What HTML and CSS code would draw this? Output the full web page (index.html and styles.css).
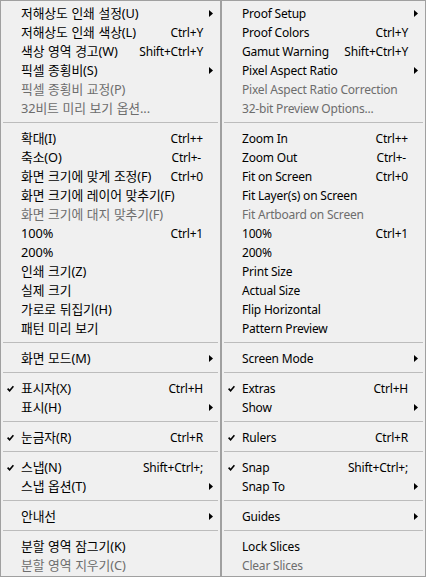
FILE: index.html
```html
<!DOCTYPE html>
<html lang="ko">
<head>
  <meta charset="UTF-8">
  <title>보기 메뉴</title>
  <link rel="stylesheet" href="styles.css">
</head>
<body>
  <div class="menus">
    <ul class="menu menu-ko">
      <li class="item"><span class="check"></span><span class="label">저해상도 인쇄 설정(U)</span><span class="key"></span><span class="sub"><svg width="4" height="7"><polygon points="0,0 4,3.5 0,7"/></svg></span></li>
      <li class="item"><span class="check"></span><span class="label">저해상도 인쇄 색상(L)</span><span class="key">Ctrl+Y</span><span class="sub"></span></li>
      <li class="item"><span class="check"></span><span class="label">색상 영역 경고(W)</span><span class="key">Shift+Ctrl+Y</span><span class="sub"></span></li>
      <li class="item"><span class="check"></span><span class="label">픽셀 종횡비(S)</span><span class="key"></span><span class="sub"><svg width="4" height="7"><polygon points="0,0 4,3.5 0,7"/></svg></span></li>
      <li class="item disabled"><span class="check"></span><span class="label">픽셀 종횡비 교정(P)</span><span class="key"></span><span class="sub"></span></li>
      <li class="item disabled"><span class="check"></span><span class="label">32비트 미리 보기 옵션...</span><span class="key"></span><span class="sub"></span></li>
      <li class="sep"></li>
      <li class="item"><span class="check"></span><span class="label">확대(I)</span><span class="key">Ctrl++</span><span class="sub"></span></li>
      <li class="item"><span class="check"></span><span class="label">축소(O)</span><span class="key key-minus">Ctrl+-</span><span class="sub"></span></li>
      <li class="item"><span class="check"></span><span class="label">화면 크기에 맞게 조정(F)</span><span class="key">Ctrl+0</span><span class="sub"></span></li>
      <li class="item"><span class="check"></span><span class="label">화면 크기에 레이어 맞추기(F)</span><span class="key"></span><span class="sub"></span></li>
      <li class="item disabled"><span class="check"></span><span class="label">화면 크기에 대지 맞추기(F)</span><span class="key"></span><span class="sub"></span></li>
      <li class="item"><span class="check"></span><span class="label">100%</span><span class="key">Ctrl+1</span><span class="sub"></span></li>
      <li class="item"><span class="check"></span><span class="label">200%</span><span class="key"></span><span class="sub"></span></li>
      <li class="item"><span class="check"></span><span class="label">인쇄 크기(Z)</span><span class="key"></span><span class="sub"></span></li>
      <li class="item"><span class="check"></span><span class="label">실제 크기</span><span class="key"></span><span class="sub"></span></li>
      <li class="item"><span class="check"></span><span class="label">가로로 뒤집기(H)</span><span class="key"></span><span class="sub"></span></li>
      <li class="item"><span class="check"></span><span class="label">패턴 미리 보기</span><span class="key"></span><span class="sub"></span></li>
      <li class="sep"></li>
      <li class="item"><span class="check"></span><span class="label">화면 모드(M)</span><span class="key"></span><span class="sub"><svg width="4" height="7"><polygon points="0,0 4,3.5 0,7"/></svg></span></li>
      <li class="sep"></li>
      <li class="item"><span class="check"><svg width="7" height="7"><polyline points="0.6,3.6 2.6,5.8 6.4,1.2"/></svg></span><span class="label">표시자(X)</span><span class="key">Ctrl+H</span><span class="sub"></span></li>
      <li class="item"><span class="check"></span><span class="label">표시(H)</span><span class="key"></span><span class="sub"><svg width="4" height="7"><polygon points="0,0 4,3.5 0,7"/></svg></span></li>
      <li class="sep"></li>
      <li class="item"><span class="check"><svg width="7" height="7"><polyline points="0.6,3.6 2.6,5.8 6.4,1.2"/></svg></span><span class="label">눈금자(R)</span><span class="key">Ctrl+R</span><span class="sub"></span></li>
      <li class="sep"></li>
      <li class="item"><span class="check"><svg width="7" height="7"><polyline points="0.6,3.6 2.6,5.8 6.4,1.2"/></svg></span><span class="label">스냅(N)</span><span class="key">Shift+Ctrl+;</span><span class="sub"></span></li>
      <li class="item"><span class="check"></span><span class="label">스냅 옵션(T)</span><span class="key"></span><span class="sub"><svg width="4" height="7"><polygon points="0,0 4,3.5 0,7"/></svg></span></li>
      <li class="sep"></li>
      <li class="item"><span class="check"></span><span class="label">안내선</span><span class="key"></span><span class="sub"><svg width="4" height="7"><polygon points="0,0 4,3.5 0,7"/></svg></span></li>
      <li class="sep"></li>
      <li class="item"><span class="check"></span><span class="label">분할 영역 잠그기(K)</span><span class="key"></span><span class="sub"></span></li>
      <li class="item disabled"><span class="check"></span><span class="label">분할 영역 지우기(C)</span><span class="key"></span><span class="sub"></span></li>
    </ul>
    <ul class="menu menu-en">
      <li class="item"><span class="check"></span><span class="label">Proof Setup</span><span class="key"></span><span class="sub"><svg width="4" height="7"><polygon points="0,0 4,3.5 0,7"/></svg></span></li>
      <li class="item"><span class="check"></span><span class="label">Proof Colors</span><span class="key">Ctrl+Y</span><span class="sub"></span></li>
      <li class="item"><span class="check"></span><span class="label">Gamut Warning</span><span class="key">Shift+Ctrl+Y</span><span class="sub"></span></li>
      <li class="item"><span class="check"></span><span class="label">Pixel Aspect Ratio</span><span class="key"></span><span class="sub"><svg width="4" height="7"><polygon points="0,0 4,3.5 0,7"/></svg></span></li>
      <li class="item disabled"><span class="check"></span><span class="label">Pixel Aspect Ratio Correction</span><span class="key"></span><span class="sub"></span></li>
      <li class="item disabled"><span class="check"></span><span class="label">32-bit Preview Options...</span><span class="key"></span><span class="sub"></span></li>
      <li class="sep"></li>
      <li class="item"><span class="check"></span><span class="label">Zoom In</span><span class="key">Ctrl++</span><span class="sub"></span></li>
      <li class="item"><span class="check"></span><span class="label">Zoom Out</span><span class="key key-minus">Ctrl+-</span><span class="sub"></span></li>
      <li class="item"><span class="check"></span><span class="label">Fit on Screen</span><span class="key">Ctrl+0</span><span class="sub"></span></li>
      <li class="item"><span class="check"></span><span class="label">Fit Layer(s) on Screen</span><span class="key"></span><span class="sub"></span></li>
      <li class="item disabled"><span class="check"></span><span class="label">Fit Artboard on Screen</span><span class="key"></span><span class="sub"></span></li>
      <li class="item"><span class="check"></span><span class="label">100%</span><span class="key">Ctrl+1</span><span class="sub"></span></li>
      <li class="item"><span class="check"></span><span class="label">200%</span><span class="key"></span><span class="sub"></span></li>
      <li class="item"><span class="check"></span><span class="label">Print Size</span><span class="key"></span><span class="sub"></span></li>
      <li class="item"><span class="check"></span><span class="label">Actual Size</span><span class="key"></span><span class="sub"></span></li>
      <li class="item"><span class="check"></span><span class="label">Flip Horizontal</span><span class="key"></span><span class="sub"></span></li>
      <li class="item"><span class="check"></span><span class="label">Pattern Preview</span><span class="key"></span><span class="sub"></span></li>
      <li class="sep"></li>
      <li class="item"><span class="check"></span><span class="label">Screen Mode</span><span class="key"></span><span class="sub"><svg width="4" height="7"><polygon points="0,0 4,3.5 0,7"/></svg></span></li>
      <li class="sep"></li>
      <li class="item"><span class="check"><svg width="7" height="7"><polyline points="0.6,3.6 2.6,5.8 6.4,1.2"/></svg></span><span class="label">Extras</span><span class="key">Ctrl+H</span><span class="sub"></span></li>
      <li class="item"><span class="check"></span><span class="label">Show</span><span class="key"></span><span class="sub"><svg width="4" height="7"><polygon points="0,0 4,3.5 0,7"/></svg></span></li>
      <li class="sep"></li>
      <li class="item"><span class="check"><svg width="7" height="7"><polyline points="0.6,3.6 2.6,5.8 6.4,1.2"/></svg></span><span class="label">Rulers</span><span class="key">Ctrl+R</span><span class="sub"></span></li>
      <li class="sep"></li>
      <li class="item"><span class="check"><svg width="7" height="7"><polyline points="0.6,3.6 2.6,5.8 6.4,1.2"/></svg></span><span class="label">Snap</span><span class="key">Shift+Ctrl+;</span><span class="sub"></span></li>
      <li class="item"><span class="check"></span><span class="label">Snap To</span><span class="key"></span><span class="sub"><svg width="4" height="7"><polygon points="0,0 4,3.5 0,7"/></svg></span></li>
      <li class="sep"></li>
      <li class="item"><span class="check"></span><span class="label">Guides</span><span class="key"></span><span class="sub"><svg width="4" height="7"><polygon points="0,0 4,3.5 0,7"/></svg></span></li>
      <li class="sep"></li>
      <li class="item"><span class="check"></span><span class="label">Lock Slices</span><span class="key"></span><span class="sub"></span></li>
      <li class="item disabled"><span class="check"></span><span class="label">Clear Slices</span><span class="key"></span><span class="sub"></span></li>
    </ul>
  </div>
</body>
</html>
```
FILE: styles.css
```css
* { box-sizing: border-box; margin: 0; padding: 0; }
body {
  font-family: "Noto Sans", "Noto Sans CJK KR", sans-serif;
  font-size: 12px;
  color: #000;
  background: #f0f0f0;
}
.menus {
  display: flex;
  height: 577px;
}
.menu {
  list-style: none;
  border: 1px solid #a0a0a0;
  padding: 3px 0 1px;
  background: #f0f0f0;
}
.menu-ko { width: 221px; }
.menu-en { width: 205px; }
.item {
  display: flex;
  align-items: center;
  height: 19px;
  line-height: 19px;
  white-space: nowrap;
}
.item.disabled { color: #6d6d6d; }
.check {
  width: 20px;
  height: 19px;
  display: flex;
  align-items: center;
  padding-left: 6px;
}
.check svg {
  fill: none;
  stroke: #000;
  stroke-width: 1.6;
}
.label { flex: 1; }
.menu-en .label, .key { letter-spacing: -0.2px; }
.menu-ko .label {
  font-size: 12.8px;
  letter-spacing: -0.1px;
  word-spacing: 0.5px;
}
.key { text-align: right; }
.key-minus { margin-right: 2px; }
.sub {
  width: 17px;
  height: 19px;
  display: flex;
  align-items: center;
  padding-left: 6px;
}
.sub svg { fill: #000; }
.sep {
  height: 1px;
  background: #bcbcbc;
  margin: 4px 2px 6px;
}
```
